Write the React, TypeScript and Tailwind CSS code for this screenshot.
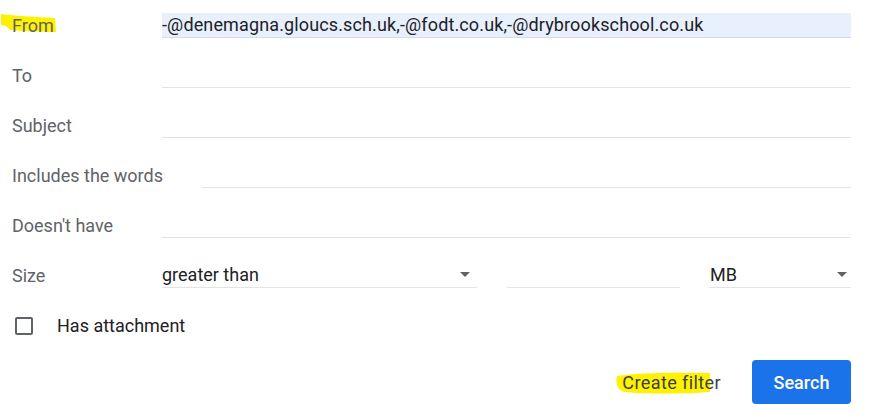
import React from "react";

function Caret() {
  return (
    <svg width="10" height="5" viewBox="0 0 10 5" className="shrink-0">
      <path d="M0 0 L10 0 L5 5 Z" fill="#5f6368" />
    </svg>
  );
}

function Row({ label, labelW = "w-[150px]", children }: { label: React.ReactNode; labelW?: string; children?: React.ReactNode }) {
  return (
    <div className="flex h-[50px] items-center">
      <div className={`${labelW} shrink-0 text-[18px] text-[#5f6368]`}>{label}</div>
      {children}
    </div>
  );
}

function Field({ value, active }: { value?: string; active?: boolean }) {
  return (
    <div
      className={`flex h-[25px] flex-1 items-center border-b ${
        active ? "border-[#d2dcee] bg-[#e8f0fe]" : "border-[#e3e3e3]"
      } text-[18px] tracking-[0.13px] text-[#202124]`}
    >
      {value}
    </div>
  );
}

export default function App() {
  return (
    <div
      className="relative h-[419px] w-[869px] bg-white pl-[12px] pr-[18px]"
      style={{ fontFamily: "Roboto, 'Liberation Sans', sans-serif" }}
    >
      <Row
        label={
          <span className="relative inline-block leading-[27px]">
            <svg className="absolute left-[-12px] top-[1px]" width="60" height="22" viewBox="0 0 60 22">
              <path d="M1 1 C10 2 30 4 55 5 L56 19 C40 19 20 18 10 17 L6 13 L1 12 Z" fill="#fff200" />
            </svg>
            <span className="relative">From</span>
          </span>
        }
      >
        <Field value="-@denemagna.gloucs.sch.uk,-@fodt.co.uk,-@drybrookschool.co.uk" active />
      </Row>
      <Row label="To">
        <Field />
      </Row>
      <Row label="Subject">
        <Field />
      </Row>
      <Row label="Includes the words" labelW="w-[190px]">
        <Field />
      </Row>
      <Row label="Doesn't have">
        <Field />
      </Row>
      <Row label="Size">
        <div className="flex h-[25px] w-[315px] items-center justify-between border-b border-[#e3e3e3] pr-[7px] text-[18px] text-[#202124]">
          <span>greater than</span>
          <Caret />
        </div>
        <div className="ml-[30px] h-[25px] w-[173px] border-b border-[#e3e3e3]" />
        <div className="ml-[29px] flex h-[25px] flex-1 items-center justify-between border-b border-[#e3e3e3] pl-[1px] pr-[4px] text-[18px] text-[#202124]">
          <span>MB</span>
          <Caret />
        </div>
      </Row>
      <div className="flex h-[51px] items-center">
        <div className="ml-[3px] h-[18px] w-[18px] rounded-[2px] border-2 border-[#5f6368]" />
        <span className="ml-[24px] text-[18px] text-[#202124]">Has attachment</span>
      </div>
      <div className="mt-[9px] flex items-center justify-end">
        <span className="relative inline-block text-[18px] leading-[27px] tracking-[0.4px] text-[#3c4043]">
          <svg className="absolute left-[-8px] top-[1px]" width="100" height="26" viewBox="0 0 100 26">
            <path d="M3 6 C20 3 60 2 96 3 L96 22 C70 24 30 24 10 22 C4 20 1 14 3 6 Z" fill="#fff200" />
          </svg>
          <span className="relative">Create filter</span>
        </span>
        <button className="ml-[31px] h-[44px] w-[99px] rounded-[4px] bg-[#1a73e8] text-[18px] font-medium text-white">
          Search
        </button>
      </div>
    </div>
  );
}
